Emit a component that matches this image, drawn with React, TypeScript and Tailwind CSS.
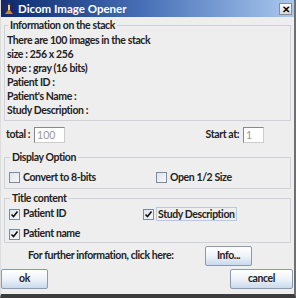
import React from "react";

function Check({ checked }: { checked?: boolean }) {
  return (
    <span className="inline-flex shrink-0 w-[11px] h-[11px] border border-[#7b8ba0] bg-gradient-to-br from-[#dfe4ea] to-[#f7f8fa] items-center justify-center">
      {checked && (
        <svg width="9" height="9" viewBox="0 0 9 9">
          <path d="M1.5 4.5 L3.5 6.5 L7.5 1.5" stroke="#111" strokeWidth="1.6" fill="none" />
        </svg>
      )}
    </span>
  );
}

function Btn({ label, className }: { label: string; className: string }) {
  return (
    <button
      className={
        "h-[20px] rounded-[2px] border border-[#8a9ab0] bg-gradient-to-b from-[#ffffff] via-[#eef3f9] to-[#c9d9ec] font-bold text-[#222] " +
        className
      }
    >
      {label}
    </button>
  );
}

export default function App() {
  return (
    <div
      className="w-[296px] h-[298px] bg-[#eeeeee] text-[#222] text-[10.5px] tracking-[-0.4px] font-bold flex flex-col border-r-[2px] border-b-[4px] border-l border-r-[#6f6f6f] border-b-[#3c3c3c] border-l-[#dcdcdc]"
      style={{ fontFamily: 'Lato, "Liberation Sans", sans-serif' }}
    >
      <div className="h-[17px] shrink-0 flex items-center bg-gradient-to-r from-[#0b2a6e] via-[#4a72b8] to-[#aac8ee] pl-[2px] pr-[2px]">
        <svg width="12" height="13" viewBox="0 0 12 13" className="mr-[3px]">
          <rect x="0" y="0" width="12" height="13" fill="#1a2a66" />
          <path d="M6 1 L7 7 L5 7 Z" fill="#e0b040" />
          <path d="M2 12 L6 7 L10 12 Z" fill="#c98a20" />
          <rect x="5" y="3" width="2" height="5" fill="#f4d070" />
        </svg>
        <span className="text-white text-[11.5px] tracking-normal font-bold leading-none">Dicom Image Opener</span>
        <div className="ml-auto w-[13px] h-[12px] bg-gradient-to-b from-[#ffffff] to-[#d8d8d8] border border-[#8c8c8c] flex items-center justify-center text-[10px] leading-none text-black">
          ✕
        </div>
      </div>

      <div className="flex flex-col px-[3px] pt-[2px]">
        <fieldset className="border border-[#cfd3d8] h-[102px] px-[2px]">
          <legend className="px-[2px] ml-[1px] leading-[13px]">Information on the stack</legend>
          <div className="flex flex-col leading-[14px] mt-[1px]">
            <span>There are 100 images in the stack</span>
            <span>size : 256 x 256</span>
            <span>type : gray (16 bits)</span>
            <span>Patient ID :</span>
            <span>Patient's Name :</span>
            <span>Study Description :</span>
          </div>
        </fieldset>

        <div className="flex items-center h-[16px] mt-[6px] px-[2px]">
          <span className="mr-[4px]">total :</span>
          <div className="w-[31px] h-[16px] bg-white border border-[#888] border-r-[#ccc] border-b-[#ccc] text-[#999] font-normal tracking-normal pl-[2px] leading-[14px]">
            100
          </div>
          <span className="ml-auto mr-[4px]">Start at:</span>
          <div className="w-[21px] h-[16px] bg-white border border-[#888] border-r-[#ccc] border-b-[#ccc] text-[#999] font-normal pl-[2px] leading-[14px] mr-[25px]">
            1
          </div>
        </div>

        <fieldset className="border border-[#cfd3d8] h-[38px] mt-[8px] px-[4px]">
          <legend className="px-[2px] ml-[1px] leading-[13px]">Display Option</legend>
          <div className="flex items-center mt-[6px]">
            <div className="flex items-center gap-[3px] w-[147px]">
              <Check />
              <span>Convert to 8-bits</span>
            </div>
            <div className="flex items-center gap-[3px]">
              <Check />
              <span>Open 1/2 Size</span>
            </div>
          </div>
        </fieldset>

        <fieldset className="border border-[#cfd3d8] h-[51px] mt-[3px] px-[4px]">
          <legend className="px-[2px] ml-[1px] leading-[13px]">Title content</legend>
          <div className="grid grid-cols-[134px_1fr] gap-y-[6px] mt-[2px]">
            <div className="flex items-center gap-[3px] h-[14px]">
              <Check checked />
              <span>Patient ID</span>
            </div>
            <div className="flex items-center gap-[2px] h-[14px]">
              <Check checked />
              <span className="border border-[#b7c9de] px-[1px] leading-[12px]">Study Description</span>
            </div>
            <div className="flex items-center gap-[3px] h-[14px]">
              <Check checked />
              <span>Patient name</span>
            </div>
          </div>
        </fieldset>

        <div className="flex items-center h-[20px] mt-[3px]">
          <span className="ml-[24px]">For further information, click here:</span>
          <Btn label="Info..." className="w-[47px] ml-auto mr-[39px]" />
        </div>

        <div className="flex items-center mt-[3px] -mx-[3px]">
          <Btn label="ok" className="w-[47px]" />
          <Btn label="cancel" className="w-[63px] ml-auto mr-[1px]" />
        </div>
      </div>
    </div>
  );
}
